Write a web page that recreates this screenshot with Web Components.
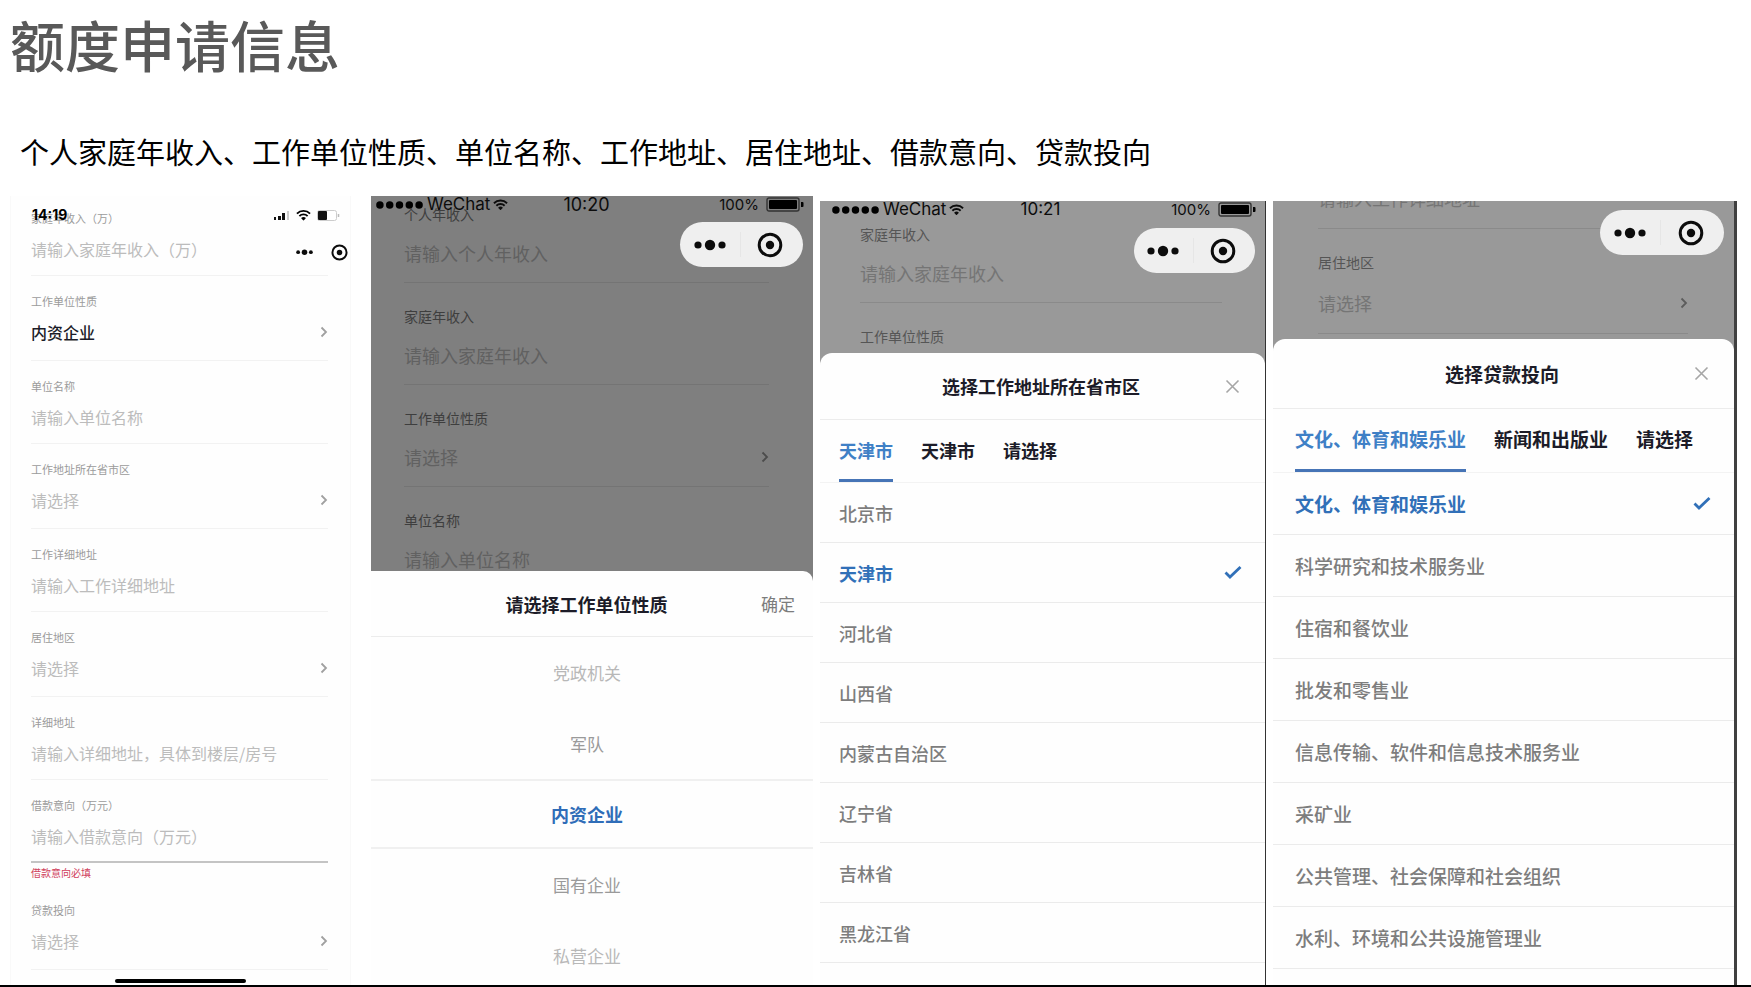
<!DOCTYPE html>
<html lang="zh-CN">
<head>
<meta charset="utf-8">
<title>额度申请信息</title>
<style>
  body { margin: 0; background: #fff; font-family: "Noto Sans CJK SC", sans-serif; }
</style>
</head>
<body>
<credit-page></credit-page>

<script>
const define = (name, render, setup) => customElements.define(name, class extends HTMLElement {
  connectedCallback() {
    if (this.shadowRoot) return;
    const root = this.attachShadow({ mode: 'open' });
    const attr = (key, fallback = '') => this.getAttribute(key) ?? fallback;
    root.innerHTML = '<style>*{box-sizing:border-box}</style>' + render(attr, this);
    if (setup) setup(root, this);
  }
});

const wifi = `<svg viewBox="0 0 16 12" aria-hidden="true"><g fill="none" stroke="currentColor" stroke-width="2"><path d="M1 4.5a10 10 0 0 1 14 0"/><path d="M3.6 7.2a6.2 6.2 0 0 1 8.8 0"/></g><path d="M8 12 5.4 9.3a3.7 3.7 0 0 1 5.2 0z" fill="currentColor"/></svg>`;

/* Signal, clock and battery strip along the top of a phone */
define('status-bar', (attr) => attr('kind') === 'modern' ? `
  <style>
    :host { position: absolute; inset: 11px 10px auto 21px; display: flex; align-items: center; color: #000;
      font: 700 14px/16px Inter, "Liberation Sans", sans-serif; }
    svg { display: block; height: 12px; }
    time { flex: 1; }
    .icons { display: flex; gap: 6px; }
  </style>
  <time>${attr('time')}</time>
  <span class="icons">
    <svg width="17" viewBox="0 0 17 12" fill="#111" aria-hidden="true"><path d="M1 8h2v3H1zM5 7h3v4H5zM9 4h3v7H9z"/><path d="M14 2h2v9h-2z" fill="#ccc"/></svg>
    <svg width="15" viewBox="0 0 16 12" aria-hidden="true">${wifi}</svg>
    <svg width="23" viewBox="0 0 23 12" aria-hidden="true"><rect x=".5" y="1.5" width="19" height="10" rx="2" fill="#fff" stroke="#ccc"/><rect x="1" y="2" width="9" height="9" rx="1" fill="#111"/><path d="M21.5 5v3" stroke="#bbb" stroke-width="1.5"/></svg>
  </span>` : `
  <style>
    :host { position: absolute; inset: 0 var(--status-right, 9px) auto var(--status-left, 4px); height: var(--status-height, 15px);
      display: grid; grid-template-columns: 1fr auto 1fr; align-items: center; color: #0c0c0c;
      font: 400 17px/17px Inter, "Liberation Sans", sans-serif; }
    span { display: flex; align-items: center; gap: 3px; }
    time { padding-right: 6px; font-size: var(--time-size, 18px); }
    .power { justify-content: flex-end; font-size: 15px; gap: 7px; }
    .wifi { width: 15px; height: 12px; }
    .wifi svg, svg { display: block; }
  </style>
  <span>
    <svg width="49" height="10" viewBox="0 0 50 10" aria-hidden="true"><circle cx="5" cy="5" r="3.8"/><circle cx="15" cy="5" r="3.8"/><circle cx="25" cy="5" r="3.8"/><circle cx="35" cy="5" r="3.8"/><circle cx="45" cy="5" r="3.8"/></svg>
    WeChat<i class="wifi">${wifi}</i>
  </span>
  <time>${attr('time')}</time>
  <span class="power">100%
    <svg width="38" height="15" viewBox="0 0 38 15" aria-hidden="true"><rect x="1" y="1" width="32" height="13" rx="2" fill="none" stroke="#333" stroke-width="1.4"/><rect x="3" y="3" width="28" height="9" rx="1"/><path d="M35 5h1.5a1 1 0 0 1 1 1v3a1 1 0 0 1-1 1H35z"/></svg>
  </span>`);

/* Mini-program capsule: menu and close */
define('mini-capsule', () => `
  <style>
    :host { position: absolute; top: var(--capsule-top, 26px); right: var(--capsule-right, 10px);
      display: flex; width: var(--capsule-width, 123px); height: var(--capsule-height, 45px);
      background: var(--capsule-bg, #efefef); border-radius: 24px; }
    button { flex: 1; display: grid; place-items: center; padding: 0; border: 0; background: none; color: #0c0c0c; }
    button + button { border-left: 1px solid var(--capsule-rule, #e6e6e6); margin: 10px 0; padding-right: 3px; }
    .dots { width: var(--dots-size, 32px); }
    .ring { width: var(--ring-size, 26px); }
  </style>
  <button type="button" aria-label="更多"><svg class="dots" viewBox="0 0 32 12" fill="currentColor"><circle cx="4" cy="6" r="3.6"/><circle cx="16" cy="6" r="5.2"/><circle cx="28" cy="6" r="3.6"/></svg></button>
  <button type="button" aria-label="关闭小程序"><svg class="ring" viewBox="0 0 26 26"><circle cx="13" cy="13" r="10.8" fill="none" stroke="currentColor" stroke-width="3"/><circle cx="13" cy="13" r="4.2" fill="currentColor"/></svg></button>`);

/* Labelled form row: a text box, or a drop-down with a chevron */
define('form-field', (attr) => {
  const picker = attr('kind') === 'select';
  const control = picker
    ? `<select id="f"><option>${attr('value', '请选择')}</option></select>
       <svg width="8" height="12" viewBox="0 0 8 12" aria-hidden="true"><path d="M1.5 1.5 6 6l-4.500 4.500" fill="none" stroke="currentColor" stroke-width="1.800"/></svg>`
    : `<input id="f" type="text" placeholder="${attr('placeholder')}">`;
  return `
  <style>
    :host { display: block; flex: none; }
    .row { display: flex; flex-direction: column; height: var(--field-height, 102px);
      padding-top: var(--field-pad, 24px); border-bottom: 1px solid var(--rule, #747474); gap: var(--field-gap, 18px); }
    :host([kind=select]) .row { height: var(--select-height, var(--field-height, 102px)); }
    :host([invalid]) .row { border-bottom: 2px solid #c4c4c4; }
    label { color: var(--label, #454545); font-size: var(--label-size, 14px); line-height: 18px; }
    .control { display: flex; align-items: center; height: 24px; color: var(--chevron, #4c4c4c); }
    input, select { flex: 1; min-width: 0; height: 24px; margin: 0; padding: 0; border: 0; outline: 0; background: none;
      appearance: none; color: var(--hint, #666); font: inherit; font-size: var(--value-size, 18px); line-height: 24px; }
    input::placeholder { color: var(--hint, #666); opacity: 1; }
    :host([filled]) select { color: #1c1c28; font-weight: 500; }
    p { margin: 0; height: 22px; color: #d0405c; font-size: 10px; line-height: 20px; }
  </style>
  <div class="row"><label for="f">${attr('label')}</label><div class="control">${control}</div></div>
  ${attr('invalid') ? `<p role="alert">${attr('invalid')}</p>` : ''}`;
});

/* Bottom sheet: heading, an action at the right, and its content */
define('bottom-sheet', (attr) => `
  <style>
    :host { display: flex; flex-direction: column; flex: 1; min-height: 0; overflow: hidden; background: #fefefe;
      border-radius: var(--sheet-radius, 12px 12px 0 0); }
    header { flex: none; display: grid; grid-template-columns: 1fr auto 1fr; align-items: center;
      height: var(--head-height, 67px); padding: 0 var(--head-right, 25px) 0 var(--head-left, 22px);
      border-bottom: 1px solid #ececec; }
    h2 { grid-column: 2; margin: 0; color: #1c1c28; font-size: var(--option-size, 18px); line-height: 24px; font-weight: 700; }
    button { justify-self: end; display: block; padding: 0; border: 0; background: none; color: #7c7c7c; font: inherit; font-size: 17px; line-height: 24px; }
    svg { display: block; color: #a6a6a6; }
  </style>
  <header><h2>${attr('heading')}</h2>${attr('action')
    ? `<button type="button">${attr('action')}</button>`
    : `<button type="button" aria-label="关闭"><svg width="15" height="15" viewBox="0 0 15 15"><path d="m1.500 1.500 12 12m0-12-12 12" stroke="currentColor" stroke-width="1.600"/></svg></button>`}</header>
  <slot></slot>`);

/* Level tabs of a cascading picker */
define('level-tabs', (attr) => `
  <style>
    :host { flex: none; display: flex; gap: 28px; height: var(--tabs-height, 63px); padding: 0 var(--inset, 19px); border-bottom: 1px solid #f3f3f3; }
    button { padding: 0; border: 0; border-bottom: 3px solid transparent; background: none; color: #1c1c28; white-space: nowrap;
      font: inherit; font-weight: 700; font-size: var(--option-size, 18px); line-height: 24px; }
    [aria-selected=true] { color: #3f80c6; border-color: #4674b6; }
  </style>
  ${attr('items').split('|').map((t, i) => `<button type="button" role="tab" aria-selected="${i === 0}">${t}</button>`).join('')}`,
  (root, host) => host.setAttribute('role', 'tablist'));

/* Single-choice list with a tick on the chosen row */
define('option-list', (attr) => `
  <style>
    :host { display: block; }
    label { display: flex; align-items: center; height: var(--option-height, 60px); padding: 0 var(--tick-right, 23px) 0 var(--inset, 19px);
      border-bottom: 1px solid #ebebeb; color: #7d7d7d; font-size: var(--option-size, 18px); line-height: 24px; font-weight: 500; }
    span { flex: 1; }
    input { position: absolute; opacity: 0; margin: 0; }
    svg { display: none; }
    label:has(:checked) { color: #3170b8; font-weight: 700; }
    :checked ~ svg { display: block; }
  </style>
  ${attr('items').split('|').map((t) => `<label><input type="radio" name="o" ${t === attr('value') ? 'checked' : ''}><span>${t}</span>
    <svg width="18" height="15" viewBox="0 0 18 15" aria-hidden="true"><path d="m1.500 7.500 4.500 4.500L16.500 2" fill="none" stroke="currentColor" stroke-width="2.800"/></svg></label>`).join('')}`);

/* Wheel picker: rows fade with their distance from the chosen one */
define('wheel-picker', (attr) => {
  const items = attr('items').split('|'), at = items.indexOf(attr('value'));
  return `
  <style>
    :host { display: block; }
    label { display: flex; align-items: center; justify-content: center; height: 71px; padding-right: 10px;
      color: #9a9a9a; font-size: 17px; line-height: 24px; }
    .far { color: #b8b8b8; }
    input { position: absolute; opacity: 0; margin: 0; }
    label:has(:checked) { height: 70px; border: solid #f0f0f0; border-width: 2px 0; color: #2f6db8; font-size: 18px; font-weight: 700; }
  </style>
  ${items.map((t, i) => `<label class="${Math.abs(i - at) > 1 ? 'far' : ''}"><input type="radio" name="w" ${i === at ? 'checked' : ''}>${t}</label>`).join('')}`;
});

/* Phone screen: the form behind, and the sheet slotted below it */
define('phone-screen', () => `
  <style>
    :host { position: relative; display: flex; flex-direction: column; min-width: 0; min-height: 0; overflow: hidden; background: var(--screen, #999); }
    .form { display: flex; flex-direction: column; height: var(--form-height, auto); flex: none; overflow: hidden;
      padding: 0 var(--form-right) 0 var(--form-left); }
    ::slotted(form-field:first-of-type) { margin-top: var(--scroll, 0); }
  </style>
  <div class="form"><slot></slot></div>
  <slot name="sheet"></slot>
  <slot name="chrome"></slot>`);

define('home-indicator', () => `
  <style>:host { position: absolute; left: 104px; right: 104px; bottom: 2px; height: 4px; border-radius: 2px; background: #000; }</style>`);

define('credit-page', () => `
  <style>
    :host { display: flex; flex-direction: column; height: 100vh; overflow: hidden; border-bottom: 2px solid #000; box-sizing: border-box; }
    h1 { margin: 0; padding: 3px 10px 0; color: #595959; font-size: 55px; line-height: 80px; font-weight: 500; }
    .lead { margin: 0; padding: 48px 20px 25px; color: #000; font-size: 29px; line-height: 40px; white-space: nowrap; }
    main { flex: 1; min-height: 0; display: grid; grid-template-rows: minmax(0, 1fr);
      grid-template-columns: 354fr 442fr 446fr 464fr; gap: 7px; padding: 0 14px 0 10px; }
    .apply { margin-right: 13px; border: solid #f9f9f9; border-width: 0 1px; --screen: #fefefe; --form-left: 20px; --form-right: 22px; --scroll: -3px;
      --field-height: 83px; --select-height: 85px; --field-pad: 16px; --field-gap: 10px; --label-size: 11px; --value-size: 16px;
      --label: #9b9b9b; --hint: #bcbcbc; --rule: #f2f2f2; --chevron: #a0a0a0;
      --capsule-top: 42px; --capsule-right: -9px; --capsule-width: 72px; --capsule-height: 28px; --capsule-bg: #fefefe; --capsule-rule: transparent;
      --dots-size: 17px; --ring-size: 17px; }
    .nature { --screen: #7f7f7f; --form-height: 375px; --form-left: 33px; --form-right: 44px; --scroll: -15px; --label: #3e3e3e; --hint: #616161;
      --head-left: 7px; --head-right: 18px; --head-height: 66px; --sheet-radius: 0 10px 0 0; }
    .region { margin-top: 5px; border-right: 1px solid #333; --form-height: 152px; --form-left: 40px; --form-right: 43px; --label: #555; --hint: #757575; --rule: #8a8a8a;
      --status-left: 11px; --status-height: 17px; --capsule-width: 121px; --capsule-top: 27px; --time-size: 17px; }
    .purpose { margin-top: 5px; border-right: 3px solid #404040; --form-height: 138px; --form-left: 45px; --form-right: 46px; --scroll: -77px;
      --field-height: 105px; --field-gap: 20px; --label: #555; --hint: #757575; --rule: #8a8a8a; --chevron: #5c5c5c;
      --capsule-top: 9px; --capsule-width: 124px; --inset: 22px; --option-size: 19px; --option-height: 62px; --tabs-height: 64px; --head-height: 70px; }
  </style>
  <h1>额度申请信息</h1>
  <p class="lead">个人家庭年收入、工作单位性质、单位名称、工作地址、居住地址、借款意向、贷款投向</p>
  <main>
    <phone-screen class="apply">
      <form-field label="家庭年收入（万）" placeholder="请输入家庭年收入（万）"></form-field>
      <form-field kind="select" filled label="工作单位性质" value="内资企业"></form-field>
      <form-field label="单位名称" placeholder="请输入单位名称"></form-field>
      <form-field kind="select" label="工作地址所在省市区"></form-field>
      <form-field label="工作详细地址" placeholder="请输入工作详细地址"></form-field>
      <form-field kind="select" label="居住地区"></form-field>
      <form-field label="详细地址" placeholder="请输入详细地址，具体到楼层/房号"></form-field>
      <form-field label="借款意向（万元）" placeholder="请输入借款意向（万元）" invalid="借款意向必填"></form-field>
      <form-field kind="select" label="贷款投向"></form-field>
      <status-bar slot="chrome" kind="modern" time="14:19"></status-bar>
      <mini-capsule slot="chrome"></mini-capsule>
      <home-indicator slot="chrome"></home-indicator>
    </phone-screen>

    <phone-screen class="nature">
      <form-field label="个人年收入" placeholder="请输入个人年收入"></form-field>
      <form-field label="家庭年收入" placeholder="请输入家庭年收入"></form-field>
      <form-field kind="select" label="工作单位性质"></form-field>
      <form-field label="单位名称" placeholder="请输入单位名称"></form-field>
      <bottom-sheet slot="sheet" heading="请选择工作单位性质" action="确定">
        <wheel-picker items="党政机关|军队|内资企业|国有企业|私营企业" value="内资企业"></wheel-picker>
      </bottom-sheet>
      <status-bar slot="chrome" time="10:20"></status-bar>
      <mini-capsule slot="chrome"></mini-capsule>
    </phone-screen>

    <phone-screen class="region">
      <form-field label="家庭年收入" placeholder="请输入家庭年收入"></form-field>
      <form-field kind="select" label="工作单位性质"></form-field>
      <bottom-sheet slot="sheet" heading="选择工作地址所在省市区">
        <level-tabs items="天津市|天津市|请选择"></level-tabs>
        <option-list items="北京市|天津市|河北省|山西省|内蒙古自治区|辽宁省|吉林省|黑龙江省" value="天津市"></option-list>
      </bottom-sheet>
      <status-bar slot="chrome" time="10:21"></status-bar>
      <mini-capsule slot="chrome"></mini-capsule>
    </phone-screen>

    <phone-screen class="purpose">
      <form-field label="工作详细地址" placeholder="请输入工作详细地址"></form-field>
      <form-field kind="select" label="居住地区"></form-field>
      <bottom-sheet slot="sheet" heading="选择贷款投向">
        <level-tabs items="文化、体育和娱乐业|新闻和出版业|请选择"></level-tabs>
        <option-list items="文化、体育和娱乐业|科学研究和技术服务业|住宿和餐饮业|批发和零售业|信息传输、软件和信息技术服务业|采矿业|公共管理、社会保障和社会组织|水利、环境和公共设施管理业" value="文化、体育和娱乐业"></option-list>
      </bottom-sheet>
      <mini-capsule slot="chrome"></mini-capsule>
    </phone-screen>
  </main>`);
</script>
</body>
</html>
